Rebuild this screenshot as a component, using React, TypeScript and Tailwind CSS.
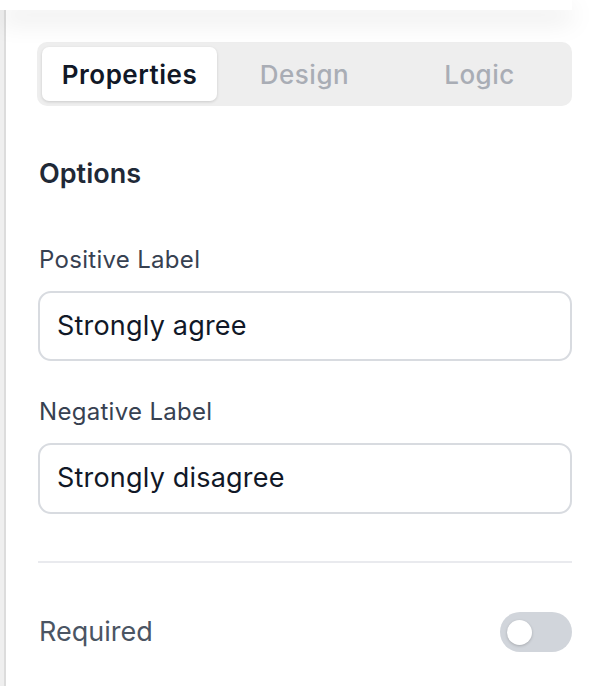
import React from "react";

export default function App() {
  return (
    <div className="w-[596px] h-[686px] bg-white overflow-hidden flex flex-col font-['Inter',sans-serif]">
      <div className="h-[10px] w-[572px] shrink-0 bg-white relative z-10 shadow-[0_10px_26px_rgba(0,0,0,0.13)]" />
      <div className="flex flex-1">
        <div className="w-[4px] bg-[#efefef]" />
        <div className="w-[2px] bg-[#dcdcdc]" />
        <div className="flex-1 pl-[31px] pr-[24px] pt-[32px] flex flex-col">
          <div className="h-[64px] rounded-[10px] bg-[#eeeeee] p-[5px] grid grid-cols-3">
            <div className="rounded-[7px] bg-white shadow-[0_1px_3px_rgba(0,0,0,0.15)] flex items-center justify-center pt-[1px] text-[26px] tracking-[0.5px] font-semibold text-[#111827]">
              Properties
            </div>
            <div className="flex items-center justify-center pt-[1px] text-[26px] tracking-[0.5px] font-medium text-[#a9adb5]">
              Design
            </div>
            <div className="flex items-center justify-center pt-[1px] text-[26px] tracking-[0.5px] font-medium text-[#a9adb5]">
              Logic
            </div>
          </div>

          <div className="mt-[52px] pl-[2px] text-[27px] leading-[32px] font-semibold text-[#1f2937]">
            Options
          </div>

          <div className="mt-[55px] pl-[2px] text-[24px] leading-[30px] tracking-[0.3px] font-normal text-[#374151]">
            Positive Label
          </div>
          <div className="mt-[16px] ml-[1px] h-[70px] rounded-[13px] border-2 border-[#d8dbe0] flex items-center pl-[17px] text-[27px] tracking-[0.2px] text-[#111827]">
            Strongly agree
          </div>

          <div className="mt-[36px] pl-[2px] text-[24px] leading-[30px] tracking-[0.3px] font-normal text-[#374151]">
            Negative Label
          </div>
          <div className="mt-[16px] ml-[1px] h-[71px] rounded-[13px] border-2 border-[#d8dbe0] flex items-center pl-[17px] text-[27px] tracking-[0.2px] text-[#111827]">
            Strongly disagree
          </div>

          <div className="mt-[47px] ml-[1px] h-[2px] bg-[#e9eaee]" />

          <div className="mt-[49px] pl-[2px] h-[40px] flex items-center justify-between">
            <span className="text-[27px] text-[#4b5563]">Required</span>
            <div className="w-[72px] h-[40px] rounded-full bg-[#d1d5db] flex items-center pl-[7px]">
              <div className="w-[25px] h-[25px] rounded-full bg-white shadow-[0_1px_3px_rgba(0,0,0,0.2)]" />
            </div>
          </div>
        </div>
      </div>
    </div>
  );
}
